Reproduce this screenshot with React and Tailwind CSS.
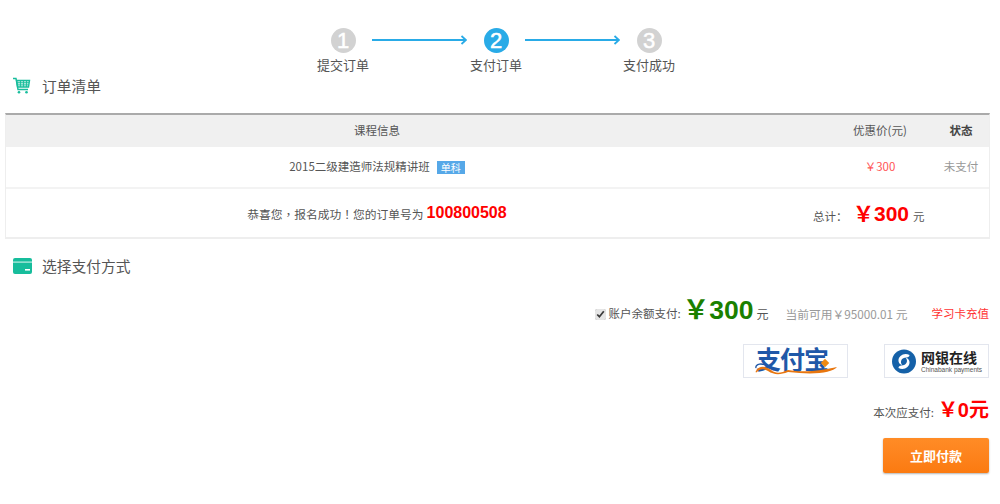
import React from "react";

const cjk = "font-['Noto_Sans_CJK_SC','Liberation_Sans',sans-serif]";
// bold amounts are Arial-width digits, the yuan sign falls through to the CJK face
const num = "font-['Liberation_Sans','Noto_Sans_CJK_SC',sans-serif] font-bold";
const centered = "font-['Noto_Sans_CJK_TC',sans-serif]";

const Step = ({ num, label, active }) => (
  <div className="flex w-[52px] flex-col items-center">
    <div
      className={`flex h-[25px] w-[25px] items-center justify-center rounded-full font-['Liberation_Sans',sans-serif] text-[22px] leading-none text-white [-webkit-text-stroke:0.5px_white] ${
        active ? "bg-[#29abe7]" : "bg-[#d2d2d2]"
      }`}
    >
      {num}
    </div>
    <div className="mt-[2px] whitespace-nowrap text-[13px] leading-[20px] text-[#555]">{label}</div>
  </div>
);

const Arrow = () => (
  <svg className="mx-[3px] mt-[7px] h-[10px] w-[95px]" viewBox="0 0 95 10" fill="none" stroke="#29abe7">
    <path d="M0 5H94" strokeWidth="2" />
    <path d="M89.5 1L94 5L89.5 9" strokeWidth="1.8" />
  </svg>
);

const CartIcon = () => (
  <svg className="h-[18px] w-[18px]" viewBox="0 0 18 18" fill="none" stroke="#17bd9c" strokeWidth="1.4">
    <path d="M0 1.5H3L5 12.5H15" />
    <path d="M3.6 3.5H16.5L15.5 10H4.6Z" fill="#17bd9c" fillOpacity="0.25" />
    <path d="M4 5.7H16M4.4 7.9H15.6M7.5 3.5V10M10.5 3.5V10M13.5 3.5V10" strokeWidth="0.9" />
    <circle cx="6" cy="15.2" r="1.3" fill="#17bd9c" stroke="none" />
    <circle cx="13.5" cy="15.2" r="1.3" fill="#17bd9c" stroke="none" />
  </svg>
);

const CardIcon = () => (
  <svg className="h-[16px] w-[19px]" viewBox="0 0 19 16">
    <rect width="19" height="16" rx="2" fill="#17bd9c" />
    <rect y="3.5" width="19" height="1.2" fill="#bfeee4" />
    <rect x="12" y="11" width="5" height="1.6" fill="#fff" />
  </svg>
);

const AlipayLogo = () => (
  <div className="relative flex h-[34px] w-[105px] items-center border border-[#e3e6ee] bg-white pl-[12px]">
    <span className="pb-[6px] text-[25px] leading-none font-bold tracking-[-1px] text-[#1f58a8]">支付宝</span>
    <svg className="absolute top-[14px] left-[10px] h-[16px] w-[84px]" viewBox="0 0 84 16" fill="none">
      <path d="M2 12C5 6 12 7 17 11C22 15 27 14 34 11C50 14 70 11 83 8C78 14 60 16 34 13C26 16 20 16 14 12C9 9 5 10 3 13C2 14 1 13 2 12Z" fill="#e8760f" />
      <path d="M2 9C1 5 8 3 15 8" stroke="#1f58a8" strokeWidth="1.4" />
      <rect x="68" y="1" width="6" height="6" fill="#f08a12" transform="rotate(45 71 4)" />
    </svg>
  </div>
);

const ChinabankLogo = () => (
  <div className="flex h-[34px] w-[105px] items-center gap-[5px] border border-[#e3e6ee] bg-white pl-[7px]">
    <svg className="h-[25px] w-[24px] shrink-0" viewBox="0 0 26 26">
      <circle cx="13" cy="13" r="13" fill="#1561a8" />
      <path d="M19 6C13 3 7 7 7 12C7 14 8 16 11 17C8 13 11 9 14 9C17 9 19 8 19 6Z" fill="#fff" />
      <path d="M7 20C13 23 19 19 19 14C19 12 18 10 15 9C18 13 15 17 12 17C9 17 7 18 7 20Z" fill="#fff" />
    </svg>
    <div className="flex flex-col">
      <span className="text-[14px] leading-[18px] font-bold text-[#222]">网银在线</span>
      <span className="font-['Liberation_Sans',sans-serif] text-[6.5px] leading-[8px] whitespace-nowrap text-[#555]">Chinabank payments</span>
    </div>
  </div>
);

export default function App() {
  return (
    <div className={`h-[504px] w-[1000px] overflow-hidden bg-white ${cjk} text-[#555]`}>
      <div className="flex justify-center pt-[28px] pr-[8px]">
        <Step num="1" label="提交订单" />
        <Arrow />
        <Step num="2" label="支付订单" active />
        <Arrow />
        <Step num="3" label="支付成功" />
      </div>

      <div className="mt-[-1px] flex h-[24px] items-center gap-[11px] pl-[13px]">
        <CartIcon />
        <span className="text-[14.75px] text-[#555]">订单清单</span>
      </div>

      <div className="mx-[5px] mt-[15px] w-[985px] border-t-2 border-r border-b-2 border-l border-[#eee] border-t-[#aaa] text-[11.5px]">
        <div className="flex h-[32px] items-center bg-[#f0f0f0] pb-[1px]">
          <div className="w-[742px] text-center">课程信息</div>
          <div className="ml-auto w-[106px] text-center">优惠价(元)</div>
          <div className="w-[56px] text-center font-bold text-[#444]">状态</div>
        </div>
        <div className="flex h-[42px] items-center border-b-2 border-[#f3f3f3]">
          <div className="flex w-[742px] items-center justify-center gap-[7px]">
            <span>2015二级建造师法规精讲班</span>
            <span className="bg-[#56a8e8] px-[4px] text-[10px] leading-[13px] text-white">单科</span>
          </div>
          <div className="ml-auto w-[106px] text-center text-[#f55]">￥300</div>
          <div className="w-[56px] text-center text-[#999]">未支付</div>
        </div>
        <div className="flex h-[48px] items-center">
          <div className="flex w-[742px] items-center justify-center gap-[3px]">
            <span className="mt-[2px] text-[11.75px]">
              恭喜您<span className={centered}>，</span>报名成功<span className={centered}>！</span>您的订单号为
            </span>
            <span className={`text-[16px] text-[#f00] ${num}`}>100800508</span>
          </div>
          <div className="ml-[65px] flex items-center text-[#555]">
            <span className="mt-[7px] w-[40px]">总计：</span>
            <span className={`text-[21px] leading-none text-[#f00] ${num}`}>￥300</span>
            <span className="mt-[7px] ml-[4px]">元</span>
          </div>
        </div>
      </div>

      <div className="mt-[15px] flex h-[24px] items-center gap-[10px] pl-[13px]">
        <CardIcon />
        <span className="text-[14.75px] text-[#555]">选择支付方式</span>
      </div>

      <div className="mt-[16px] flex h-[40px] items-center justify-end pr-[11px] text-[11.5px]">
        <input type="checkbox" defaultChecked className="mr-[3px] h-[11px] w-[11px] accent-[#e5e5e5]" />
        <span>账户余额支付:</span>
        <span className={`ml-[2px] pb-[8px] text-[26.5px] leading-none text-[#1a8000] ${num}`}>￥300</span>
        <span className="ml-[3px] text-[12px]">元</span>
        <span className="ml-[17px] text-[11.75px] text-[#999]">当前可用￥95000.01 元</span>
        <span className="ml-[24px] text-[#f33]">学习卡充值</span>
      </div>

      <div className="mt-[10px] flex justify-end gap-[36px] pr-[11px]">
        <AlipayLogo />
        <ChinabankLogo />
      </div>

      <div className="mt-[17px] flex h-[30px] items-center justify-end pr-[11px] text-[11.5px]">
        <span className="mt-[5px]">本次应支付:</span>
        <span className={`ml-[4px] text-[20px] leading-none text-[#f00] ${num}`}>￥0元</span>
      </div>

      <div className="mt-[13px] flex justify-end pr-[11px]">
        <button className="h-[35px] w-[106px] rounded-[2px] bg-linear-to-b from-[#ff8c26] to-[#fb7a10] text-[13px] font-bold text-white shadow-[0_1px_2px_rgba(0,0,0,0.3)]">
          立即付款
        </button>
      </div>
    </div>
  );
}
